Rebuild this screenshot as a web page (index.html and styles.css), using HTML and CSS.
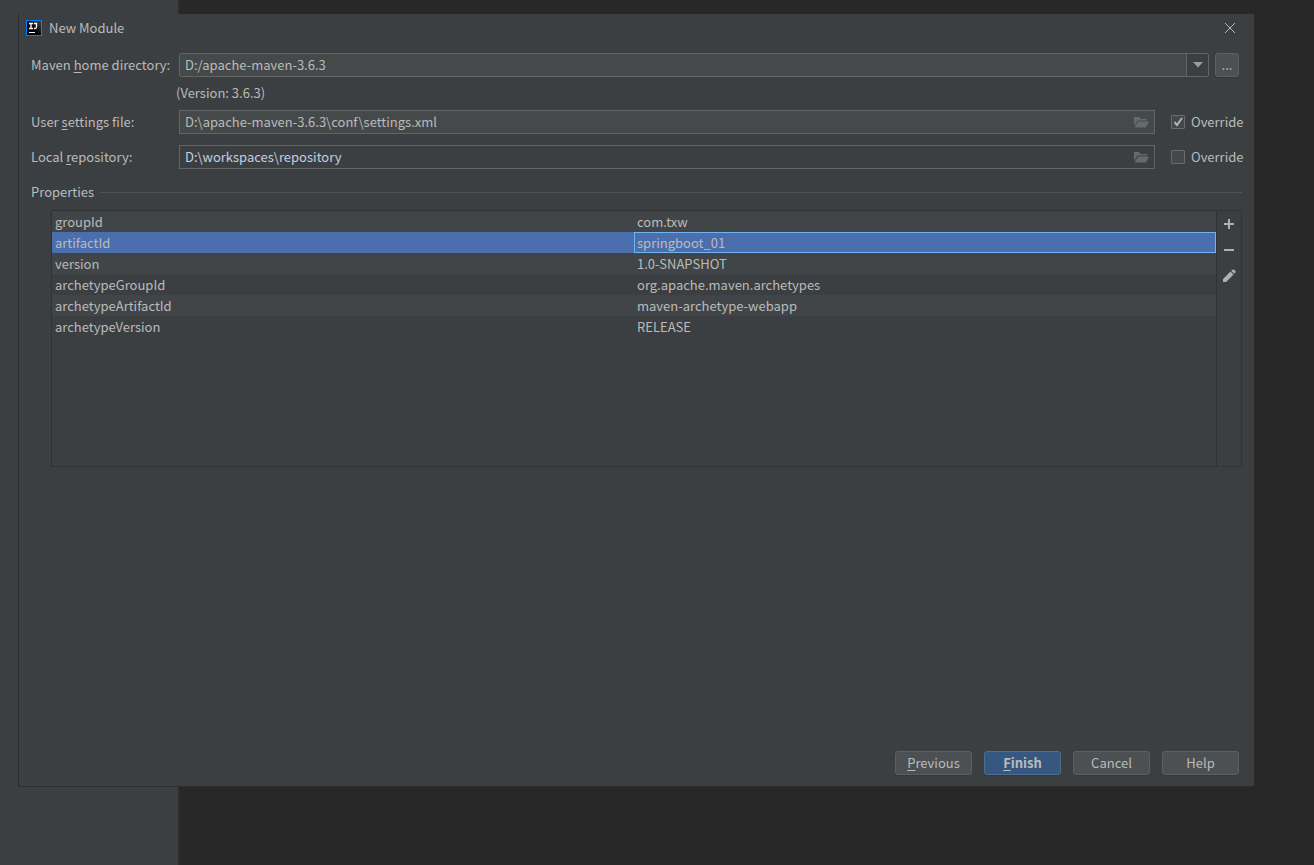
FILE: index.html
```html
<!DOCTYPE html>
<html lang="en">
<head>
<meta charset="utf-8">
<title>New Module</title>
<link rel="stylesheet" href="styles.css">
</head>
<body>
<div class="desktop">
  <div class="side-panel"></div>
  <form class="dialog">
    <header class="titlebar">
      <svg class="logo" width="16" height="16" viewBox="0 0 16 16" aria-hidden="true">
        <defs><linearGradient id="lg" x1="0" y1="1" x2="1" y2="0"><stop offset=".4" stop-color="#000"/><stop offset="1" stop-color="#444"/></linearGradient></defs>
        <rect width="16" height="16" fill="#087cfa"/>
        <rect x="1" y="1" width="14" height="14" fill="url(#lg)"/>
        <path d="M3 3.500h4M5 3.500v5M3 8.500h4M8 3.500h3M10.500 3v4q0 1.500-1.500 1.500h-1" fill="none" stroke="#fff" stroke-width="1.300"/>
        <path d="M3 12.500h6" stroke="#fff"/>
      </svg>
      <h1 class="title">New Module</h1>
      <button type="button" class="close" aria-label="Close">
        <svg width="12" height="12" viewBox="0 0 12 12"><path d="M1 1l10 10M11 1L1 11" stroke="#b4b6b7" stroke-width="1"/></svg>
      </button>
    </header>

    <div class="row">
      <label class="label" for="home">Maven <u>h</u>ome directory:</label>
      <div class="combo">
        <select id="home" class="field"><option>D:/apache-maven-3.6.3</option></select>
        <span class="combo-arrow"><svg width="10" height="6" viewBox="0 0 10 6"><path d="M0 0h10L5 5.500z" fill="#9a9da0"/></svg></span>
      </div>
      <button type="button" class="btn browse" aria-label="Browse">...</button>
    </div>
    <p class="version">(Version: 3.6.3)</p>
    <div class="row">
      <label class="label" for="settings">User <u>s</u>ettings file:</label>
      <div class="path">
        <input id="settings" class="field" type="text" value="D:\apache-maven-3.6.3\conf\settings.xml">
        <button type="button" class="folder" aria-label="Choose file"><svg width="15" height="12" viewBox="0 0 15 12"><path d="M0 10V1h5l1.500 2H13v1.500H3.500z" fill="#646b70"/><path d="M4 5.500h11L12 11.500H0.700z" fill="#646b70"/></svg></button>
      </div>
      <label class="override"><input class="check" type="checkbox" checked>Override</label>
    </div>
    <div class="row row-repo">
      <label class="label" for="repo">Local <u>r</u>epository:</label>
      <div class="path">
        <input id="repo" class="field field-plain" type="text" value="D:\workspaces\repository">
        <button type="button" class="folder" aria-label="Choose folder"><svg width="15" height="12" viewBox="0 0 15 12"><path d="M0 10V1h5l1.500 2H13v1.500H3.500z" fill="#646b70"/><path d="M4 5.500h11L12 11.500H0.700z" fill="#646b70"/></svg></button>
      </div>
      <label class="override"><input class="check" type="checkbox">Override</label>
    </div>

    <h2 class="section">Properties</h2>
    <div class="properties">
      <div class="table-area">
        <table class="table">
          <tbody>
            <tr><td>groupId</td><td>com.txw</td></tr>
            <tr class="selected"><td>artifactId</td><td class="focused">springboot_01</td></tr>
            <tr><td>version</td><td>1.0-SNAPSHOT</td></tr>
            <tr><td>archetypeGroupId</td><td>org.apache.maven.archetypes</td></tr>
            <tr><td>archetypeArtifactId</td><td>maven-archetype-webapp</td></tr>
            <tr><td>archetypeVersion</td><td>RELEASE</td></tr>
          </tbody>
        </table>
      </div>
      <div class="tools">
        <button type="button" class="tool" aria-label="Add"><svg width="16" height="16" viewBox="0 0 16 16"><path d="M3 8h10M8 3v10" stroke="#afb1b3" stroke-width="2"/></svg></button>
        <button type="button" class="tool" aria-label="Remove"><svg width="16" height="16" viewBox="0 0 16 16"><path d="M3 8h10" stroke="#afb1b3" stroke-width="2"/></svg></button>
        <button type="button" class="tool" aria-label="Edit"><svg width="16" height="16" viewBox="0 0 16 16"><path d="M2 11L9.500 3.500l3 3L5 14H2zM10.200 2.800l.900-.900q1.200-1 2.400 0l.600.600q1 1.200 0 2.400l-.900.900z" fill="#afb1b3"/></svg></button>
      </div>
    </div>

    <footer class="actions">
      <button type="button" class="btn"><span><u>P</u>revious</span></button>
      <button type="submit" class="btn primary"><span><u>F</u>inish</span></button>
      <button type="button" class="btn">Cancel</button>
      <button type="button" class="btn">Help</button>
    </footer>
  </form>
</div>
</body>
</html>
```
FILE: styles.css
```css
* { box-sizing: border-box; }

body {
  margin: 0;
  background: #282828;
  color: #bbbbbb;
  font: 13px/20px "Noto Sans CJK SC", "Noto Sans", sans-serif;
}

button, input, select { font: inherit; color: inherit; margin: 0; }

.desktop {
  position: relative;
  display: flex;
  min-height: 100vh;
  padding: 14px 60px 78px 18px;
}

.side-panel {
  position: absolute;
  inset: 0 auto 0 0;
  width: 179px;
  background: #3c3f41;
  border-right: 1px solid #323232;
}

.dialog {
  position: relative;
  flex: 1;
  display: flex;
  flex-direction: column;
  padding: 0 12px 11px;
  background: #3c3f41;
  border-left: 1px solid #2b2d2e;
  border-bottom: 1px solid #2b2d2e;
}

.titlebar {
  display: flex;
  align-items: center;
  gap: 7px;
  height: 28px;
  margin: 0 0 11px -5px;
}
.title { flex: 1; margin: 0; font-size: 13px; font-weight: 400; }
.close {
  display: flex;
  padding: 6px;
  border: 0;
  background: none;
}

.row {
  display: grid;
  grid-template-columns: 148px 1fr auto;
  align-items: center;
}
.row-repo { margin-top: 11px; }
.label { white-space: nowrap; }
u { text-decoration: underline; text-underline-offset: 2px; }

.field {
  display: block;
  width: 100%;
  height: 24px;
  padding: 0 5px 1px;
  border: 1px solid #646464;
  border-radius: 0;
  background: #45494a;
  appearance: none;
  outline: 0;
}
.field-plain { background: #3c3f41; color: #c3d0e0; }

.combo, .path { position: relative; }
.combo .field { border-radius: 2px; }
.combo-arrow {
  position: absolute;
  inset: 1px 1px 1px auto;
  width: 22px;
  display: flex;
  align-items: center;
  justify-content: center;
  background: #3c3f41;
  border-left: 1px solid #646464;
  pointer-events: none;
}
.folder {
  position: absolute;
  inset: 0 6px 0 auto;
  display: flex;
  align-items: center;
  padding: 0;
  border: 0;
  background: none;
}

.btn {
  width: 77px;
  height: 24px;
  padding: 0;
  border: 1px solid #5e6060;
  border-radius: 3px;
  background: #4c5052;
  box-shadow: 0 1px 1px #353739;
}
.browse { width: 24px; margin: 0 3px 0 6px; }
.primary { background: #365880; border-color: #4c708c; font-weight: 700; }

.version { margin: 6px 0 7px 145px; }

.override {
  display: flex;
  align-items: center;
  gap: 6px;
  width: 87px;
  padding-left: 16px;
}
.check {
  flex: none;
  appearance: none;
  width: 14px;
  height: 14px;
  border: 1px solid #6b6b6b;
  border-radius: 1px;
  background: #43494a;
}
.check:checked {
  background: #43494a url("data:image/svg+xml,%3Csvg xmlns='http://www.w3.org/2000/svg' viewBox='0 0 12 12'%3E%3Cpath d='M2.500 6l2.500 3L10 2' fill='none' stroke='%23b0b2b3' stroke-width='2'/%3E%3C/svg%3E") center / 12px;
}

.section {
  display: flex;
  align-items: center;
  gap: 6px;
  margin: 13px 0 8px;
  font-size: 13px;
  font-weight: 400;
}
.section::after { content: ""; flex: 1; height: 1px; background: #515151; }

.properties {
  display: flex;
  min-height: 257px;
  margin-left: 20px;
  border: 1px solid #323232;
}
.table-area { flex: 1; }
.table { width: 100%; table-layout: fixed; border-collapse: separate; border-spacing: 0; }
.table td { height: 21px; padding: 0 2px; line-height: 19px; border: 1px solid transparent; }
.table tr:nth-child(odd) { background: #414547; }
.table .selected { background: #4b6eaf; }
.table .selected .focused { border-color: #6fb5f5; }

.tools {
  display: flex;
  flex-direction: column;
  align-items: center;
  gap: 10px;
  width: 25px;
  padding-top: 5px;
  border-left: 1px solid #323232;
}
.tool { display: flex; padding: 0; border: 0; background: none; }

.actions {
  display: flex;
  justify-content: flex-end;
  gap: 12px;
  margin-top: auto;
  padding-right: 3px;
}
```
